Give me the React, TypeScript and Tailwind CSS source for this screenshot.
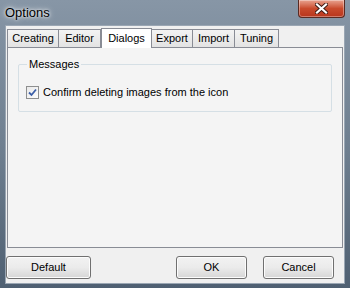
const tabs = ["Creating", "Editor", "Dialogs", "Export", "Import", "Tuning"];
const tabWidths = [52, 43, 51, 42, 43, 45];

function WinButton({ label, className }: { label: string; className: string }) {
  return (
    <button
      className={`h-[23px] rounded-[3px] border border-[#707070] bg-gradient-to-b from-[#f2f2f2] via-[#ebebeb] to-[#d6d6d6] text-[11px] text-black shadow-[inset_0_0_0_1px_#fcfcfc] ${className}`}
    >
      {label}
    </button>
  );
}

export default function App() {
  return (
    <div
      className="w-[350px] h-[288px] flex flex-col overflow-hidden bg-gradient-to-b from-[#8796a6] via-[#6f7f90] to-[#4f6072]"
      style={{ fontFamily: '"Liberation Sans", Arial, sans-serif' }}
    >
      {/* Title bar */}
      <div className="h-[25px] flex items-start justify-between relative shrink-0">
        <span className="pl-[5px] pt-[3px] text-[13px] text-black [text-shadow:0_0_6px_#ffffff,0_0_3px_#ffffff]">
          Options
        </span>
        <div className="mr-[5px] w-[47px] h-[18px] rounded-b-[4px] border border-t-0 border-[#5a2a22] bg-gradient-to-b from-[#e8a28f] via-[#c94a2c] to-[#b8351c] flex items-center justify-center shadow-[inset_0_0_0_1px_rgba(255,255,255,0.35)]">
          <svg width="13" height="11" viewBox="0 0 13 11">
            <path d="M2 1.5 L11 9.5 M11 1.5 L2 9.5" stroke="#3b1a14" strokeWidth="4" strokeLinecap="square" />
            <path d="M2 1.5 L11 9.5 M11 1.5 L2 9.5" stroke="#ffffff" strokeWidth="2.2" strokeLinecap="square" />
          </svg>
        </div>
      </div>

      {/* Client area */}
      <div className="mx-[5px] mb-[4px] flex-1 bg-[#f0f0f0] border border-[#9aa6b3] flex flex-col">
        {/* Tabs */}
        <div className="flex items-end h-[20px] pl-[1px] mt-[1px]">
          {tabs.map((t, i) => {
            const sel = t === "Dialogs";
            return (
              <div
                key={t}
                style={{ width: tabWidths[i] }}
                className={
                  sel
                    ? "h-[20px] -mb-px relative z-10 bg-white border border-b-0 border-[#898c95] flex items-center justify-center text-[11px] text-black"
                    : "h-[18px] bg-gradient-to-b from-[#f3f3f3] to-[#e3e3e3] border border-b-0 border-[#898c95] -ml-px first:ml-0 flex items-center justify-center text-[11px] text-black"
                }
              >
                {t}
              </div>
            );
          })}
        </div>

        {/* Tab panel */}
        <div className="mx-[1px] h-[201px] bg-[#f4f4f4] border border-[#898c95] pt-[16px] px-[10px]">
          <div className="relative h-[48px] border border-[#d5dfe5] rounded-[2px]">
            <span className="absolute -top-[8px] left-[8px] px-[2px] bg-[#f4f4f4] text-[11px] text-black leading-[14px]">
              Messages
            </span>
            <div className="flex items-center gap-[4px] pl-[7px] pt-[19px]">
              <div className="w-[13px] h-[13px] border border-[#8e8f8f] bg-gradient-to-br from-[#e9e9e9] to-[#fdfdfd] flex items-center justify-center">
                <svg width="9" height="9" viewBox="0 0 9 9">
                  <path d="M1 4.5 L3.5 7 L8 1.5" fill="none" stroke="#3c5fa8" strokeWidth="1.8" />
                </svg>
              </div>
              <span className="text-[11px] text-black">Confirm deleting images from the icon</span>
            </div>
          </div>
        </div>

        {/* Buttons */}
        <div className="flex items-center mt-[8px] pr-[10px]">
          <WinButton label="Default" className="w-[85px]" />
          <div className="flex-1" />
          <WinButton label="OK" className="w-[71px]" />
          <WinButton label="Cancel" className="w-[71px] ml-[16px]" />
        </div>
      </div>
    </div>
  );
}
